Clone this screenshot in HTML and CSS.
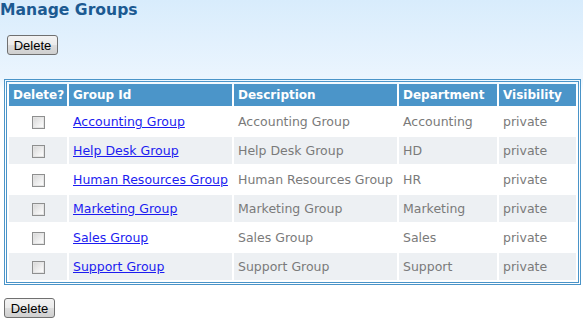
FILE: index.html
```html
<!DOCTYPE html>
<html lang="en">
<head>
    <meta charset="UTF-8">
    <meta name="viewport" content="width=device-width, initial-scale=1.0">
    <title>Manage Groups</title>
    <link rel="stylesheet" href="styles.css">
</head>

<body>
    <h1 class="page-title">Manage Groups</h1>

    <form class="groups-form">
        <div class="actions actions-top">
            <button type="button" class="btn">Delete</button>
        </div>

        <table class="groups">
            <thead>
                <tr>
                    <th class="col-del">Delete?</th>
                    <th class="col-id">Group Id</th>
                    <th class="col-desc">Description</th>
                    <th class="col-dept">Department</th>
                    <th class="col-vis">Visibility</th>
                </tr>
            </thead>
            <tbody>
                <tr>
                    <td class="check"><input type="checkbox"></td>
                    <td><a href="#">Accounting Group</a></td>
                    <td>Accounting Group</td>
                    <td>Accounting</td>
                    <td>private</td>
                </tr>
                <tr class="alt">
                    <td class="check"><input type="checkbox"></td>
                    <td><a href="#">Help Desk Group</a></td>
                    <td>Help Desk Group</td>
                    <td>HD</td>
                    <td>private</td>
                </tr>
                <tr>
                    <td class="check"><input type="checkbox"></td>
                    <td><a href="#">Human Resources Group</a></td>
                    <td>Human Resources Group</td>
                    <td>HR</td>
                    <td>private</td>
                </tr>
                <tr class="alt">
                    <td class="check"><input type="checkbox"></td>
                    <td><a href="#">Marketing Group</a></td>
                    <td>Marketing Group</td>
                    <td>Marketing</td>
                    <td>private</td>
                </tr>
                <tr>
                    <td class="check"><input type="checkbox"></td>
                    <td><a href="#">Sales Group</a></td>
                    <td>Sales Group</td>
                    <td>Sales</td>
                    <td>private</td>
                </tr>
                <tr class="alt">
                    <td class="check"><input type="checkbox"></td>
                    <td><a href="#">Support Group</a></td>
                    <td>Support Group</td>
                    <td>Support</td>
                    <td>private</td>
                </tr>
            </tbody>
        </table>

        <div class="actions actions-bottom">
            <button type="button" class="btn">Delete</button>
        </div>
    </form>
</body>

</html>
```

FILE: styles.css
```css
body {
    margin: 0;
    font-family: "DejaVu Sans", Verdana, sans-serif;
    font-size: 12.5px;
    color: #7a7a7a;
    background-color: #fff;
    background-image: linear-gradient(#d8ecfc 0, #ebf5fe 78px, #fff 92px);
    background-repeat: no-repeat;
    height: 320px;
}

.page-title {
    margin: 0;
    font-size: 15.6px;
    line-height: 20px;
    font-weight: bold;
    color: #1c5a92;
}

.actions-top {
    padding: 15px 0 0 7px;
}

.actions-bottom {
    padding: 13px 0 0 4px;
}

.btn {
    display: block;
    height: 20px;
    width: 51px;
    padding: 0;
    font-family: "Liberation Sans", Arial, sans-serif;
    font-size: 13px;
    color: #000;
    border: 1px solid #707070;
    border-radius: 3px;
    background: linear-gradient(#f3f3f3 0, #ebebeb 50%, #dddddd 51%, #cfcfcf 100%);
    cursor: pointer;
}

.groups {
    margin: 24px 0 0 4px;
    width: 577px;
    table-layout: fixed;
    border: 3px double #4a94c8;
    border-spacing: 2px;
}

.groups th,
.groups td {
    box-sizing: border-box;
    padding: 0 4px;
    text-align: left;
    white-space: nowrap;
    overflow: hidden;
}

.groups th {
    height: 22px;
    background-color: #4b95c9;
    color: #fff;
    font-weight: bold;
    font-size: 12px;
}

.col-del { width: 58px; }
.col-id { width: 163px; }
.col-desc { width: 163px; }
.col-dept { width: 98px; }

.groups td {
    height: 27px;
    background-color: #fff;
}

.groups tr.alt td {
    background-color: #edf0f3;
}

.groups td.check {
    text-align: center;
    padding: 0;
}

.groups a {
    color: #1c1cf0;
    text-decoration: underline;
}

.check input {
    appearance: none;
    display: inline-block;
    vertical-align: middle;
    width: 13px;
    height: 13px;
    margin: 0;
    border: 1px solid #8e8f8f;
    background: linear-gradient(135deg, #d6d6d6 0, #f4f4f4 70%, #fff 100%);
    box-shadow: inset 0 0 0 1px #e4e4e4;
}
```
